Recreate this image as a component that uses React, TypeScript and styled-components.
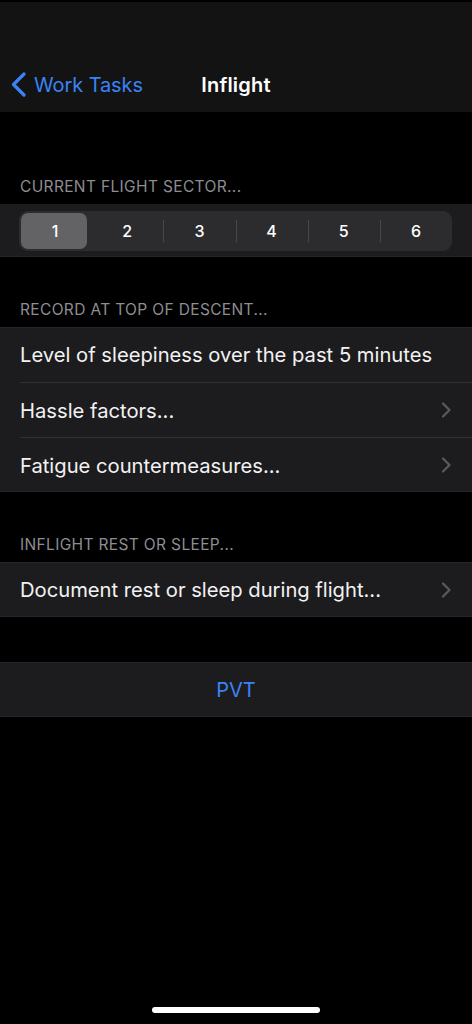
import React from 'react';
import styled, {createGlobalStyle} from 'styled-components';

const Global = createGlobalStyle`
  html, body {
    margin: 0;
    padding: 0;
    background: #000;
  }
  body {
    font-family: Inter, "Noto Sans", "Liberation Sans", sans-serif;
    -webkit-font-smoothing: antialiased;
  }
`

const Screen = styled.div`
  width: 472px;
  height: 1024px;
  background: #000;
  display: flex;
  flex-direction: column;
  padding-top: 2px;
  box-sizing: border-box;
  position: relative;
  overflow: hidden;
`

const NavBar = styled.div`
  height: 110px;
  background: #131313;
  display: grid;
  grid-template-columns: 1fr auto 1fr;
  align-items: end;
  padding: 0 10px 15px;
  box-sizing: border-box;
`

const BackButton = styled.div`
  display: flex;
  align-items: center;
  gap: 7px;
  color: #3b82f6;
  font-size: 20px;
  letter-spacing: -0.1px;
`

const Title = styled.div`
  color: #fff;
  font-size: 20px;
  font-weight: 600;
  letter-spacing: 0.2px;
`

const SectionHeader = styled.div<{ $height: number }>`
  height: ${p => p.$height}px;
  display: flex;
  align-items: flex-end;
  padding: 0 20px 8px;
  box-sizing: border-box;
  color: #8d8d92;
  font-size: 15.5px;
  letter-spacing: 0.35px;
  text-transform: uppercase;
`

const Group = styled.div`
  background: #1c1c1e;
  box-shadow: inset 0 1px #262628, inset 0 -1px #262628;
`

const Row = styled.div<{ $first?: boolean; $center?: boolean }>`
  height: 55px;
  display: flex;
  align-items: center;
  justify-content: ${p => (p.$center ? 'center' : 'space-between')};
  margin-left: ${p => (p.$center ? 0 : 20)}px;
  padding-right: ${p => (p.$center ? 0 : 21)}px;
  box-sizing: border-box;
  border-top: ${p => (p.$first ? 'none' : '1px solid #313133')};
  color: #f2f2f2;
  font-size: 20.2px;
`

const PvtLabel = styled.span`
  color: #3b82f6;
  font-size: 20px;
`

const SegmentBand = styled.div`
  background: #1c1c1e;
  height: 53px;
  padding: 7px 20px 0 19px;
  box-sizing: border-box;
  border-bottom: 1px solid #262628;
`

const Segmented = styled.div`
  height: 40px;
  background: #2c2c2f;
  border-radius: 9px;
  display: flex;
`

const Segment = styled.div<{ $selected?: boolean; $divider?: boolean }>`
  flex: 1;
  position: relative;
  isolation: isolate;
  display: flex;
  align-items: center;
  justify-content: center;
  color: #fff;
  font-size: 16px;
  font-weight: 500;

  &::before {
    content: '';
    display: ${p => (p.$divider ? 'block' : 'none')};
    position: absolute;
    left: 0;
    top: 9px;
    bottom: 9px;
    width: 1px;
    background: #48484b;
  }

  &::after {
    content: '';
    display: ${p => (p.$selected ? 'block' : 'none')};
    position: absolute;
    inset: 2px 4px 2px 2px;
    border-radius: 7px;
    background: #636366;
    z-index: -1;
  }
`

const Spacer = styled.div<{ $height: number }>`
  height: ${p => p.$height}px;
`

const HomeIndicator = styled.div`
  position: absolute;
  left: 152px;
  bottom: 11px;
  width: 168px;
  height: 6px;
  border-radius: 3px;
  background: #fff;
`

function Chevron() {
  return (
    <svg width="10" height="16" viewBox="0 0 10 16" fill="none">
      <path d="M2 1.5 L8.5 8 L2 14.5" stroke="#5a5a5e" strokeWidth="2.2" strokeLinecap="round" strokeLinejoin="round"/>
    </svg>
  );
}

function BackChevron() {
  return (
    <svg width="17" height="25" viewBox="0 0 17 25" fill="none">
      <path d="M14 2 L3.5 12.5 L14 23" stroke="#3b82f6" strokeWidth="3.2" strokeLinecap="round" strokeLinejoin="round"/>
    </svg>
  );
}

const sectors = [1, 2, 3, 4, 5, 6];
const selected = 1;

function App() {
  return (
    <Screen>
      <Global/>
      <NavBar>
        <BackButton>
          <BackChevron/>
          <span>Work Tasks</span>
        </BackButton>
        <Title>Inflight</Title>
        <div/>
      </NavBar>

      <SectionHeader $height={92}>Current flight sector...</SectionHeader>
      <SegmentBand>
        <Segmented>
          {sectors.map((n, i) => (
            <Segment
              key={n}
              $selected={n === selected}
              $divider={i > 0 && n !== selected && sectors[i - 1] !== selected}
            >
              {n}
            </Segment>
          ))}
        </Segmented>
      </SegmentBand>

      <SectionHeader $height={70}>Record at top of descent...</SectionHeader>
      <Group>
        <Row $first>Level of sleepiness over the past 5 minutes</Row>
        <Row>Hassle factors...<Chevron/></Row>
        <Row>Fatigue countermeasures...<Chevron/></Row>
      </Group>

      <SectionHeader $height={70}>Inflight rest or sleep...</SectionHeader>
      <Group>
        <Row $first>Document rest or sleep during flight...<Chevron/></Row>
      </Group>

      <Spacer $height={45}/>
      <Group>
        <Row $first $center><PvtLabel>PVT</PvtLabel></Row>
      </Group>

      <HomeIndicator/>
    </Screen>
  );
}

export default App;
